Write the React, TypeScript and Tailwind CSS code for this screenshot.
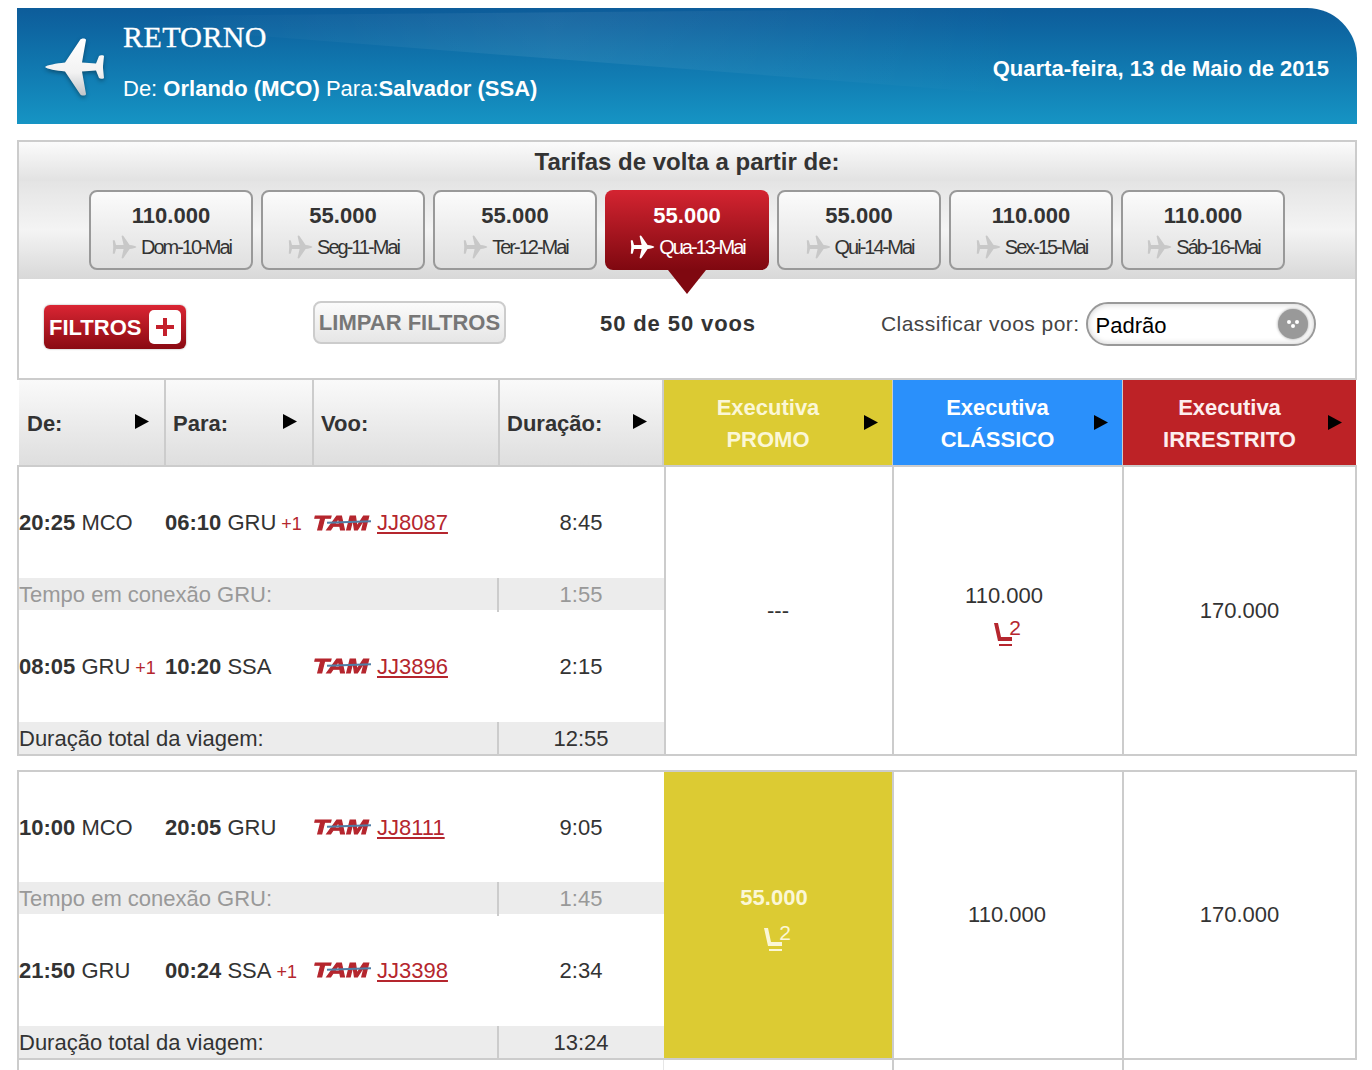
import { useId } from "react";

const dates = [
  { price: "110.000", day: "Dom-10-Mai" },
  { price: "55.000", day: "Seg-11-Mai" },
  { price: "55.000", day: "Ter-12-Mai" },
  { price: "55.000", day: "Qua-13-Mai", active: true },
  { price: "55.000", day: "Qui-14-Mai" },
  { price: "110.000", day: "Sex-15-Mai" },
  { price: "110.000", day: "Sáb-16-Mai" },
];

const trips = [
  {
    first: { dep: "20:25", from: "MCO", arr: "06:10", to: "GRU", plus: true, code: "JJ8087", time: "8:45" },
    layover: "1:55",
    second: { dep: "08:05", from: "GRU", depPlus: true, arr: "10:20", to: "SSA", code: "JJ3896", time: "2:15" },
    total: "12:55",
  },
  {
    first: { dep: "10:00", from: "MCO", arr: "20:05", to: "GRU", code: "JJ8111", time: "9:05" },
    layover: "1:45",
    second: { dep: "21:50", from: "GRU", arr: "00:24", to: "SSA", plus: true, code: "JJ3398", time: "2:34" },
    total: "13:24",
  },
];

function Plane({ className }: { className?: string }) {
  const id = useId();
  return (
    <svg viewBox="0 0 64 60" className={className}>
      <defs>
        <linearGradient id={id} x1="0" y1="0" x2="0" y2="1">
          <stop offset="0" stopColor="#ffffff" />
          <stop offset="0.6" stopColor="#f2f2f2" />
          <stop offset="1" stopColor="#c0c4c8" />
        </linearGradient>
      </defs>
      <path
        fill={`url(#${id})`}
        d="M1 30 C3 28 12 26.5 21 25.5 L36 3 C37 1 42 1 42 3 L38 25.5 L52 26.5 L55 19 C56 18 60 18 60 19 L59 29 L59 31 L60 41 C60 42 56 42 55 41 L52 33.5 L38 34.5 L42 57 C42 59 37 59 36 57 L21 34.5 C12 33.5 3 32 1 30 Z"
      />
    </svg>
  );
}

function SmallPlane({ className }: { className?: string }) {
  return (
    <svg viewBox="0 0 64 60" className={className} fill="currentColor">
      <path d="M63 30 C61 27 54 26 46 25 L31 3 C30 1 26 1 26 3 L31 25 L12 25 L9 14 C8 13 4 13 4 14 L5 29 L5 31 L4 46 C4 47 8 47 9 46 L12 35 L31 35 L26 57 C26 59 30 59 31 57 L46 35 C54 34 61 33 63 30 Z" />
    </svg>
  );
}

function Arrow() {
  return (
    <svg viewBox="0 0 14 15" className="h-[15px] w-[14px]" fill="#000">
      <path d="M0 0 L14 7.5 L0 15 Z" />
    </svg>
  );
}

function TamLogo() {
  return (
    <span className="relative mr-[6px] inline-block h-[16px] w-[58px]">
      <span className="block origin-left scale-x-[1.32] text-[20px] leading-[16px] font-bold text-[#b5262e] italic [-webkit-text-stroke:1px_#b5262e]">
        TAM
      </span>
      <span className="absolute top-[6px] left-[14px] h-[2px] w-[44px] -rotate-2 bg-[#4f7ea6]" />
    </span>
  );
}

function Seat({ color }: { color: string }) {
  return (
    <span className="ml-[6px] flex items-start justify-center font-normal">
      <svg viewBox="0 0 20 26" className="mt-[6px] -mr-[4px] h-[26px] w-[20px]" fill={color}>
        <path d="M1 1 L5 1 L8 15 L19 15 L19 19 L5 19 Z" />
        <rect x="6" y="22" width="13" height="2" />
      </svg>
      <span className="text-[21px] leading-[24px]" style={{ color }}>
        2
      </span>
    </span>
  );
}

function FlightRow({ leg, height }: { leg: any; height: string }) {
  return (
    <div className={`grid grid-cols-[146px_148px_186px_165px] items-center ${height}`}>
      <div>
        <b>{leg.dep}</b> {leg.from}
        {leg.depPlus && <span className="text-[18px] text-[#b5262e]"> +1</span>}
      </div>
      <div>
        <b>{leg.arr}</b> {leg.to}
        {leg.plus && <span className="text-[18px] text-[#b5262e]"> +1</span>}
      </div>
      <div className="flex items-center">
        <TamLogo />
        <a className="text-[#b5262e] underline">{leg.code}</a>
      </div>
      <div className="pr-px text-center">{leg.time}</div>
    </div>
  );
}

function InfoRow({ label, time, muted }: { label: string; time: string; muted?: boolean }) {
  return (
    <div className={`grid h-[32px] grid-cols-[480px_165px] bg-[#ececec] leading-[34px] ${muted ? "text-[#999]" : ""}`}>
      <div className="h-full border-r-2 border-[#ccc] whitespace-nowrap">{label}</div>
      <div className="h-full pr-px text-center">{time}</div>
    </div>
  );
}

function HeadCell({ label, width, pad }: { label: string; width: string; pad: string }) {
  return (
    <div
      className={`flex items-center justify-between border-r-2 border-[#ccc] bg-gradient-to-b from-[#fafafa] to-[#dedede] pt-[2px] pr-[15px] ${pad} ${width}`}
    >
      <b className="text-[#333]">{label}</b>
      <span className="-mt-[5px]">
        <Arrow />
      </span>
    </div>
  );
}

function FareHead({ top, bottom, className, width }: { top: string; bottom: string; className: string; width: string }) {
  return (
    <div className={`relative flex flex-col items-center justify-center pt-[2px] pr-[20px] text-[22px] leading-[32px] font-bold ${className} ${width}`}>
      <span>{top}</span>
      <span>{bottom}</span>
      <span className="absolute top-[35px] right-[14px]">
        <Arrow />
      </span>
    </div>
  );
}

export default function App() {
  return (
    <div className="h-[1070px] w-[1372px] overflow-hidden bg-white pt-[8px] pr-[15px] pl-[17px] font-['Liberation_Sans',Arial,sans-serif] text-[22px] text-[#333]">
      {/* Blue title */}
      <div className="relative flex h-[116px] items-center overflow-hidden rounded-tr-[50px] bg-gradient-to-b from-[#0d5c9a] to-[#1694c4] text-white">
        <div className="absolute inset-0 bg-gradient-to-r from-transparent from-10% via-white/[0.07] via-40% to-transparent to-75% [clip-path:polygon(0_8%,75%_0,75%_75%)]" />
        <Plane className="relative mt-[2px] ml-[27px] h-[60px] w-[64px] drop-shadow-[0_2px_2px_rgba(0,0,0,0.35)]" />
        <div className="relative ml-[15px] flex h-full flex-col">
          <div className="mt-[11px] font-['Liberation_Serif',serif] text-[30px] leading-[36px] tracking-[0.4px] [-webkit-text-stroke:0.3px_white]">
            RETORNO
          </div>
          <div className="mt-[21px] leading-[26px]">
            De: <b>Orlando (MCO)</b> Para:<b>Salvador (SSA)</b>
          </div>
        </div>
        <b className="relative mt-[5px] mr-[28px] ml-auto">Quarta-feira, 13 de Maio de 2015</b>
      </div>

      {/* Tarifas */}
      <div className="mt-[16px] border-x-2 border-t-2 border-[#ccc]">
        <div className="flex h-[39px] items-center justify-center bg-gradient-to-b from-[#fbfbfb] to-[#e2e2e2] text-[24px] font-bold">
          Tarifas de volta a partir de:
        </div>
        <div className="flex h-[98px] justify-center gap-[8px] bg-gradient-to-b from-[#e4e4e4] via-[#f4f4f4] to-[#d8d8d8] pt-[9px]">
          {dates.map((d) => (
            <div
              key={d.day}
              className={`relative flex h-[80px] w-[164px] flex-col items-center rounded-[8px] ${
                d.active
                  ? "bg-gradient-to-b from-[#d42431] to-[#7f0810] pt-[12px] text-white"
                  : "border-2 border-[#999] bg-gradient-to-b from-[#fbfbfb] to-[#e0e0e0] pt-[10px]"
              }`}
            >
              <b className="text-[22px] leading-[28px]">{d.price}</b>
              <div className="mt-[3px] flex items-center">
                <SmallPlane className={`mr-[4px] h-[24px] w-[26px] ${d.active ? "text-white" : "text-[#c8c8c8]"}`} />
                <span className="text-[20px] leading-[28px] tracking-[-2px]">{d.day}</span>
              </div>
              {d.active && (
                <span className="absolute top-[80px] left-[63px] h-[24px] w-[38px] bg-[#7f0810] [clip-path:polygon(0_0,100%_0,50%_100%)]" />
              )}
            </div>
          ))}
        </div>

        {/* Filtros */}
        <div className="flex h-[99px] items-center">
          <div className="-mt-[3px] ml-[25px] flex h-[44px] w-[142px] items-center rounded-[6px] bg-gradient-to-b from-[#da2533] to-[#8a0a12] pl-[5px] font-bold text-white shadow-[0_0_2px_rgba(0,0,0,0.4)]">
            <span>FILTROS</span>
            <span className="ml-[8px] flex h-[34px] w-[32px] items-center justify-center rounded-[5px] bg-white text-[#c4202c]">
              <svg viewBox="0 0 18 18" className="h-[18px] w-[18px]" fill="currentColor">
                <path d="M7 0 H11 V7 H18 V11 H11 V18 H7 V11 H0 V7 H7 Z" />
              </svg>
            </span>
          </div>
          <div className="-mt-[13px] ml-[127px] flex h-[43px] w-[193px] items-center justify-center rounded-[8px] border-2 border-[#ccc] bg-gradient-to-b from-[#fbfbfb] to-[#e6e6e6] font-bold text-[#777]">
            LIMPAR FILTROS
          </div>
          <b className="-mt-[11px] ml-[94px] tracking-[0.9px]">50 de 50 voos</b>
          <span className="-mt-[9px] ml-[125px] text-[21px] tracking-[0.45px] text-[#444]">Classificar voos por:</span>
          <div className="-mt-[9px] ml-[6px] flex h-[44px] w-[230px] items-center justify-between rounded-full border-2 border-[#999] bg-white pr-[6px] pl-[8px] text-black shadow-[inset_0_0_6px_rgba(0,0,0,0.2)]">
            <span className="mt-[2px]">Padrão</span>
            <span className="flex h-[30px] w-[30px] items-center justify-center rounded-full bg-[#999] shadow-[0_0_3px_#999]">
              <span className="relative h-[8px] w-[12px]">
                <span className="absolute top-0 left-0 h-[4px] w-[4px] rounded-full bg-white" />
                <span className="absolute top-0 right-0 h-[4px] w-[4px] rounded-full bg-white" />
                <span className="absolute bottom-0 left-[4px] h-[4px] w-[4px] rounded-full bg-white" />
              </span>
            </span>
          </div>
        </div>
      </div>

      {/* Cabeçalho da tabela */}
      <div className="flex h-[89px] border-y-2 border-[#ccc] pl-[2px]">
        <HeadCell label="De:" width="w-[147px]" pad="pl-[8px]" />
        <HeadCell label="Para:" width="w-[148px]" pad="pl-[7px]" />
        <div className="flex w-[186px] items-center border-r-2 border-[#ccc] bg-gradient-to-b from-[#fafafa] to-[#dedede] pt-[2px] pl-[7px]">
          <b>Voo:</b>
        </div>
        <HeadCell label="Duração:" width="w-[164px]" pad="pl-[7px]" />
        <FareHead top="Executiva" bottom="PROMO" className="bg-[#dccb33] text-[#fbf7d6]" width="w-[228px]" />
        <div className="w-px bg-[#ccc]" />
        <FareHead top="Executiva" bottom="CLÁSSICO" className="bg-[#2a90fb] text-white" width="w-[229px]" />
        <div className="w-px bg-[#ccc]" />
        <FareHead top="Executiva" bottom="IRRESTRITO" className="bg-[#bd2226] text-[#fdeeee]" width="w-[233px]" />
      </div>

      {/* Voos */}
      {trips.map((t, i) => (
        <div key={t.total} className={`flex border-2 border-[#ccc] ${i === 0 ? "border-t-0" : "mt-[14px]"}`}>
          <div className="w-[645px] shrink-0">
            <FlightRow leg={t.first} height={i === 0 ? "h-[111px]" : "h-[110px]"} />
            <InfoRow label="Tempo em conexão GRU:" time={t.layover} muted />
            <FlightRow leg={t.second} height="h-[112px]" />
            <InfoRow label="Duração total da viagem:" time={t.total} />
          </div>
          <div
            className={`flex w-[228px] flex-col items-center justify-center border-l-2 ${
              i === 1 ? "border-[#dccb33] bg-[#dccb33] pr-[10px] font-bold text-[#fbf7d6]" : "border-[#ccc] pr-[2px]"
            }`}
          >
            {i === 0 ? (
              "---"
            ) : (
              <>
                <span className="mt-[3px] mb-[7px]">55.000</span>
                <Seat color="#fbf7d6" />
              </>
            )}
          </div>
          <div className="flex w-[230px] flex-col items-center justify-center border-l-2 border-[#ccc]">
            {i === 0 ? (
              <div className="mt-[5px] mr-[8px] flex flex-col items-center">
                <span className="mb-[4px]">110.000</span>
                <Seat color="#b5262e" />
              </div>
            ) : (
              <span className="pr-[2px] pb-[2px]">110.000</span>
            )}
          </div>
          <div className={`flex w-[233px] items-center justify-center border-l-2 border-[#ccc] ${i === 1 ? "pb-[2px]" : ""}`}>
            170.000
          </div>
        </div>
      ))}

      {/* Próximo bloco, cortado pela janela */}
      <div className="flex h-[20px] border-l-2 border-[#ccc]">
        <div className="w-[645px] border-r border-[#e6e6e6]" />
        <div className="w-[228px]" />
        <div className="w-[230px] border-l-2 border-[#ccc]" />
        <div className="w-[233px] border-l-2 border-[#ccc]" />
      </div>
    </div>
  );
}
